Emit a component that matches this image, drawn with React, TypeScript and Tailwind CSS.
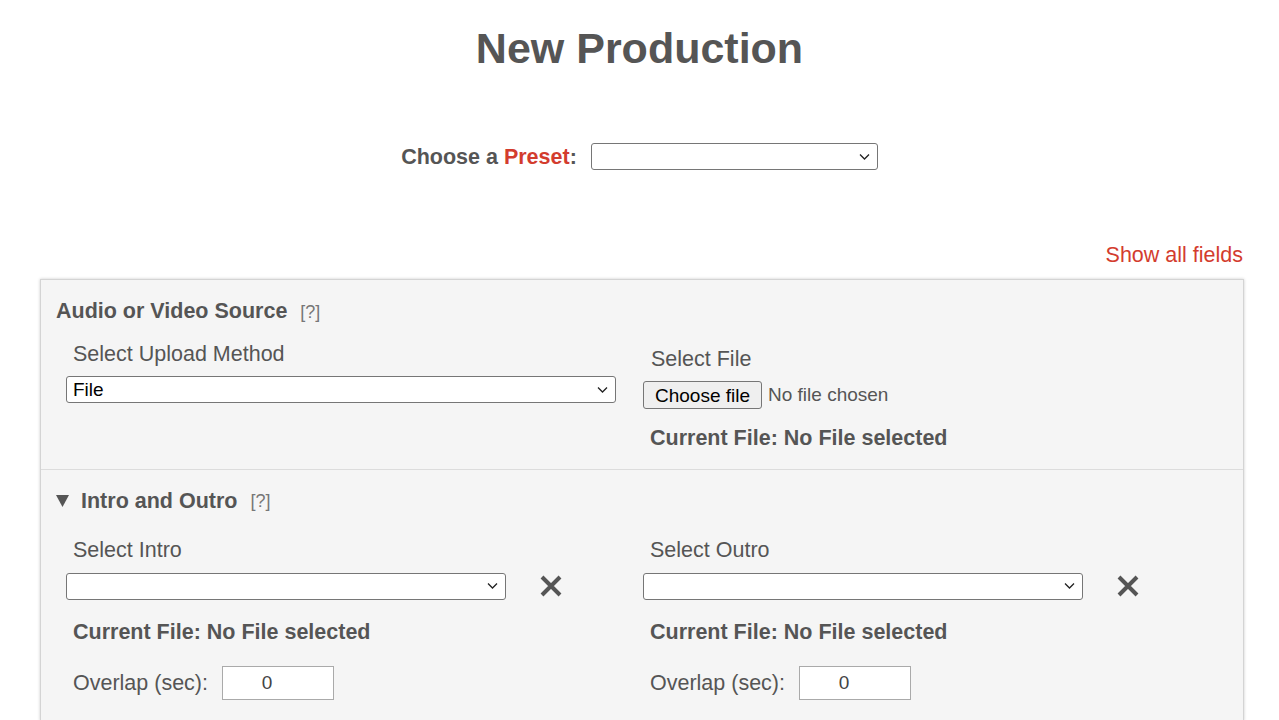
import React from "react";

const font = { fontFamily: '"Liberation Sans", Arial, Helvetica, sans-serif' };

function Chevron() {
  return (
    <svg
      className="pointer-events-none absolute right-[8px] top-1/2 -translate-y-1/2"
      width="11"
      height="7"
      viewBox="0 0 11 7"
      aria-hidden
    >
      <path d="M1 1l4.5 4.5L10 1" fill="none" stroke="#222" strokeWidth="1.3" />
    </svg>
  );
}

function Select({ width, value }: { width: string; value?: string }) {
  return (
    <div className={`relative ${width} h-[27px]`}>
      <select
        className="h-full w-full appearance-none rounded-[3px] border border-[#767676] bg-white pl-[6px] text-[19px] leading-[25px] text-black outline-none"
        defaultValue={value ?? ""}
      >
        <option value={value ?? ""}>{value ?? ""}</option>
      </select>
      <Chevron />
    </div>
  );
}

function ClearIcon() {
  return (
    <button className="flex h-[27px] w-[27px] items-center justify-center">
      <svg width="24" height="24" viewBox="0 0 24 24" aria-hidden>
        <path d="M3 3l18 18M21 3L3 21" stroke="#555" strokeWidth="4" strokeLinecap="butt" />
      </svg>
    </button>
  );
}

function Help() {
  return <span className="ml-[13px] text-[18px] font-normal text-[#777]">[?]</span>;
}

function CurrentFile() {
  return <div className="pl-[7px] text-[21.5px] font-bold leading-[24px]">Current File: No File selected</div>;
}

function Overlap() {
  return (
    <div className="mt-[22px] flex items-center gap-[14px] pl-[7px]">
      <span className="text-[21.5px] leading-[24px]">Overlap (sec):</span>
      <input
        className="h-[34px] w-[112px] border border-[#aaa] bg-white pr-[22px] text-center text-[19px] text-[#444] outline-none"
        defaultValue="0"
      />
    </div>
  );
}

function IntroOutroColumn({ label }: { label: string }) {
  return (
    <div className="flex flex-col">
      <div className="pl-[7px] text-[21.5px] leading-[24px]">{label}</div>
      <div className="mt-[11px] flex items-center gap-[31px]">
        <Select width="w-[440px]" />
        <ClearIcon />
      </div>
      <div className="mt-[20px]">
        <CurrentFile />
      </div>
      <Overlap />
    </div>
  );
}

export default function App() {
  return (
    <div className="min-h-[720px] bg-white text-[#555]" style={font}>
      <h1 className="pt-[24px] text-center text-[43px] font-bold leading-[48px]">New Production</h1>

      <div className="mt-[71px] flex items-center justify-center gap-[14px]">
        <span className="text-[21.5px] font-bold leading-[24px]">
          Choose a <span className="text-[#d33c2e]">Preset</span>:
        </span>
        <Select width="w-[287px]" />
      </div>

      <div className="mr-[36px] mt-[73px] flex justify-end">
        <a className="cursor-pointer text-[21.5px] leading-[24px] text-[#d33c2e]">Show all fields</a>
      </div>

      <div className="ml-[40px] mr-[35px] mt-[12px] border border-[#d4d4d4] bg-[#f5f5f5] shadow-[0_0_3px_rgba(0,0,0,0.2)]">
        <section className="border-b border-[#dcdcdc] pb-[19px] pl-[15px] pr-[24px] pt-[19px]">
          <h2 className="flex items-baseline text-[21.5px] font-bold leading-[24px]">
            Audio or Video Source
            <Help />
          </h2>
          <div className="mt-[18px] grid grid-cols-[577px_1fr] pl-[10px]">
            <div className="flex flex-col">
              <div className="pl-[7px] text-[21.5px] leading-[24px]">Select Upload Method</div>
              <div className="mt-[10px]">
                <Select width="w-[550px]" value="File" />
              </div>
            </div>
            <div className="flex flex-col pt-[5px]">
              <div className="pl-[8px] text-[21.5px] leading-[24px]">Select File</div>
              <div className="mt-[10px] flex items-center gap-[6px]">
                <button className="h-[28px] w-[119px] rounded-[3px] border border-[#767676] bg-[#efefef] text-[19px] text-black">
                  Choose file
                </button>
                <span className="text-[19px]">No file chosen</span>
              </div>
              <div className="mt-[16px]">
                <CurrentFile />
              </div>
            </div>
          </div>
        </section>

        <section className="pb-[20px] pl-[15px] pr-[24px] pt-[19px]">
          <h2 className="flex items-center text-[21.5px] font-bold leading-[24px]">
            <svg width="13" height="12" viewBox="0 0 13 12" className="mr-[12px]" aria-hidden>
              <path d="M0 0h13L6.5 12z" fill="#555" />
            </svg>
            Intro and Outro
            <Help />
          </h2>
          <div className="mt-[25px] grid grid-cols-[577px_1fr] pl-[10px]">
            <IntroOutroColumn label="Select Intro" />
            <IntroOutroColumn label="Select Outro" />
          </div>
        </section>
      </div>
    </div>
  );
}
